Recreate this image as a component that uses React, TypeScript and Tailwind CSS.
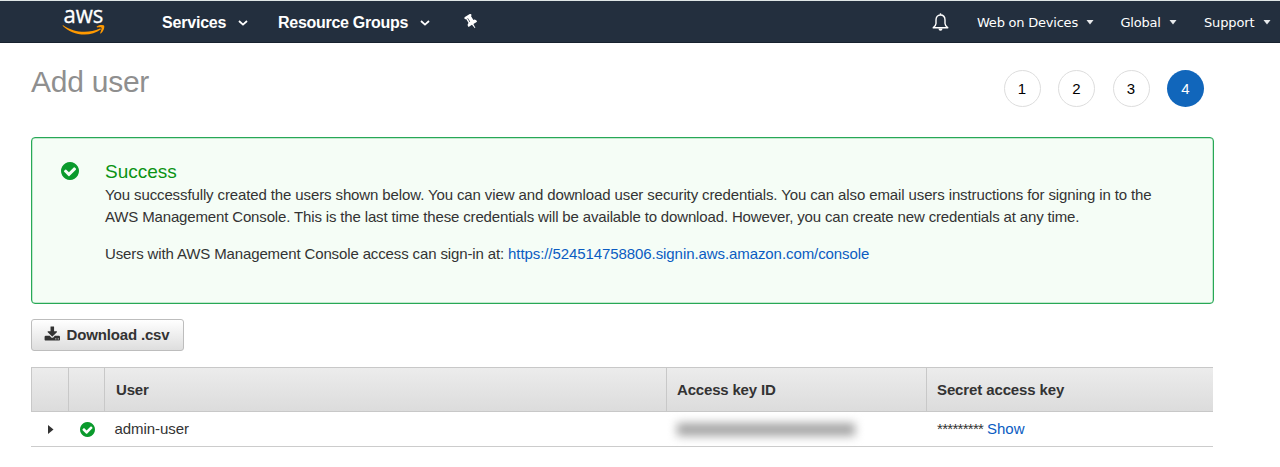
import React from "react";

const CHECK =
  "M1412 734q0-28-18-46l-91-90q-19-19-45-19t-45 19l-408 407-226-226q-19-19-45-19t-45 19l-91 90q-18 18-18 46 0 27 18 45l362 362q19 19 45 19 27 0 46-19l543-543q18-18 18-45zm252 162q0 209-103 385.5t-279.5 279.5-385.5 103-385.5-103-279.5-279.5-103-385.5 103-385.5 279.5-279.5 385.5-103 385.5 103 279.5 279.5 103 385.5z";
const DOWNLOAD =
  "M1344 1344q0-26-19-45t-45-19-45 19-19 45 19 45 45 19 45-19 19-45zm256 0q0-26-19-45t-45-19-45 19-19 45 19 45 45 19 45-19 19-45zm128-224v320q0 40-28 68t-68 28h-1472q-40 0-68-28t-28-68v-320q0-40 28-68t68-28h465l135 136q58 56 136 56t136-56l136-136h464q40 0 68 28t28 68zm-325-569q17 41-14 70l-448 448q-18 19-45 19t-45-19l-448-448q-31-29-14-70 17-39 59-39h256v-448q0-26 19-45t45-19h256q26 0 45 19t19 45v448h256q42 0 59 39z";
const PIN =
  "M800 864v-448q0-14-9-23t-23-9-23 9-9 23v448q0 14 9 23t23 9 23-9 9-23zm672 352q0 26-19 45t-45 19h-429l-51 483q-2 12-10.5 20.5t-20.5 8.5h-1q-27 0-32-27l-76-485h-404q-26 0-45-19t-19-45q0-123 78.5-221.5t177.5-98.5v-512q-52 0-90-38t-38-90 38-90 90-38h640q52 0 90 38t38 90-38 90-90 38v512q99 0 177.5 98.5t78.5 221.5z";

function CheckCircle({ className }: { className: string }) {
  return (
    <svg className={className} viewBox="128 128 1536 1536" fill="currentColor">
      <path d={CHECK} />
    </svg>
  );
}

function AwsLogo() {
  return (
    <svg className="ml-[60px] h-[41px] w-[48px]" viewBox="0 0 48 41">
      <text
        x="3.4"
        y="21.5"
        fill="#fff"
        stroke="#fff"
        strokeWidth="0.3"
        fontSize="23"
        textLength="40"
        lengthAdjust="spacingAndGlyphs"
        className="font-['Open_Sans',sans-serif]"
      >
        aws
      </text>
      <path d="M2.800 25C8 30 16 33.600 24.500 33.600c6 0 12-2 16.600-5.400-.2-.7-.6-.9-1.200-.6-5 2.100-10 3.200-15.200 3.200-8 0-15.200-2.400-21.200-6.400-.6-.4-1.100 0-.7.600z" fill="#ff9900" />
      <path d="M37 25.300c2.200-1.500 6-1.400 7-.7.700.6.300 5.200-2.900 7.700-.6.400-1.100.2-.9-.4.700-1.700 1.700-4.400 1.300-5.100-.5-.7-2.700-.6-4.200-.4-.6 0-.8-.7-.3-1.100z" fill="#ff9900" />
    </svg>
  );
}

function Chevron({ className }: { className: string }) {
  return (
    <svg className={className} viewBox="0 0 10 6" fill="none" stroke="#fff" strokeWidth="1.8">
      <path d="M1 1l4 3.600L9 1" />
    </svg>
  );
}

function Caret({ className }: { className: string }) {
  return (
    <svg className={className} viewBox="0 0 8 5" fill="#e8eaec">
      <path d="M.5 0h7L4 4.500z" />
    </svg>
  );
}

function Header() {
  return (
    <header className="flex h-[43px] items-center whitespace-nowrap border-t border-b border-t-[#dfe6e6] border-b-[#17212e] bg-[#232f3e] text-white">
      <AwsLogo />
      <div className="ml-[54px] flex w-[116px] items-center pt-[2px] text-base font-bold">
        <span className="w-[64px] tracking-[-0.2px]">Services</span>
        <Chevron className="ml-[12px] mt-[1px] h-[6px] w-[10px]" />
      </div>
      <div className="flex w-[184px] items-center pt-[2px] text-base font-bold">
        <span className="w-[130px] tracking-[-0.280px]">Resource Groups</span>
        <Chevron className="ml-[12px] mt-[1px] h-[6px] w-[10px]" />
      </div>
      <svg className="h-[16px] w-[16px] -rotate-[32deg]" viewBox="0 0 1536 1792" fill="#fff">
        <path d={PIN} />
      </svg>
      <svg className="ml-[454px] mt-[2px] h-[19px] w-[17px]" viewBox="0 0 17 19" fill="none" stroke="#fff" strokeWidth="1.400">
        <path d="M8.500 2C5.500 2 4 4.200 4 7v3.500c0 1.800-1.300 3-2.800 4.300h14.600c-1.500-1.300-2.800-2.500-2.800-4.300V7c0-2.800-1.500-5-4.500-5z" strokeLinejoin="round" />
        <path d="M8.500 .3v1.700" />
        <path d="M6.500 15.500a2 2.300 0 0 0 4 0z" fill="#fff" stroke="none" />
      </svg>
      <div className="ml-[28px] flex items-center pt-[2px] font-['DejaVu_Sans',sans-serif] text-[13px]">
        <div className="flex w-[143.500px] items-center">
          <span className="w-[101px] tracking-[-0.220px]">Web on Devices</span>
          <Caret className="ml-[8px] h-[5px] w-[8px]" />
        </div>
        <div className="flex w-[83.500px] items-center">
          <span className="w-[40px] tracking-[-0.220px]">Global</span>
          <Caret className="ml-[8px] h-[5px] w-[8px]" />
        </div>
        <div className="flex items-center">
          <span className="w-[50px] tracking-[-0.150px]">Support</span>
          <Caret className="ml-[9px] h-[5px] w-[8px]" />
        </div>
      </div>
    </header>
  );
}

function Step({ n, active = false }: { n: number; active?: boolean }) {
  return (
    <div
      className={
        active
          ? "flex size-[37px] items-center justify-center rounded-full bg-[#1166bb] pt-px text-[15px] text-white"
          : "flex size-[37px] items-center justify-center rounded-full border border-[#dddddd] pt-px text-[15px] text-black"
      }
    >
      {n}
    </div>
  );
}

export default function App() {
  return (
    <div className="h-[467px] w-[1280px] overflow-hidden bg-white font-['Liberation_Sans',Arial,sans-serif] text-[15px] text-[#333333]">
      <Header />
      <main className="ml-[31px] w-[1182px]">
        <div className="flex h-[94px] justify-between pr-[9px]">
          <h1 className="mt-[19px] text-[30px] leading-[40px] tracking-[-0.250px] text-[#8f8f8f]">Add user</h1>
          <div className="mt-[27px] flex gap-[17.500px]">
            <Step n={1} />
            <Step n={2} />
            <Step n={3} />
            <Step n={4} active />
          </div>
        </div>

        <section className="flex h-[167px] w-[1183px] rounded-[4px] border border-[#27a856] bg-[#f5fdf6] shadow-[inset_0_0_0_0.500px_#8fd4a6]">
          <CheckCircle className="ml-[29px] mt-[24px] size-[18px] text-[#0a9a2c]" />
          <div className="ml-[26px] mt-[22px] whitespace-nowrap">
            <h2 className="text-[19px] leading-[24px] text-[#0a9314]">Success</h2>
            <p className="leading-[22px]">
              <span className="tracking-[-0.116px]">You successfully created the users shown below. You can view and download user security credentials. You can also email users instructions for signing in to the</span>
              <br />
              <span className="tracking-[-0.150px]">AWS Management Console. This is the last time these credentials will be available to download. However, you can create new credentials at any time.</span>
            </p>
            <p className="mt-[15px] leading-[22px] tracking-[-0.130px]">
              Users with AWS Management Console access can sign-in at:{" "}
              <a className="tracking-[-0.080px] text-[#0a5cc2]">https://524514758806.signin.aws.amazon.com/console</a>
            </p>
          </div>
        </section>

        <button className="mt-[15px] flex h-[32px] w-[153px] items-center whitespace-nowrap rounded-[3px] border border-[#bdbdbd] bg-linear-to-b from-white to-[#dedede] pl-[12px] text-[15px] font-bold">
          <svg className="mb-[3px] h-[15px] w-[16px]" viewBox="0 0 1728 1536" fill="currentColor">
            <path d={DOWNLOAD} />
          </svg>
          <span className="ml-[6.500px] mt-px tracking-[-0.160px]">Download .csv</span>
        </button>

        <div className="mt-[16px] grid h-[45px] w-[1182px] grid-cols-[37px_36px_562px_260px_1fr] items-stretch border-y border-l border-[#c8c8c8] bg-linear-to-b from-[#ececec] to-[#dcdcdc] font-bold">
          <div className="border-r border-[#c8c8c8]" />
          <div className="border-r border-[#c8c8c8]" />
          <div className="flex items-center border-r border-[#c8c8c8] pl-[11px] pt-[2px] tracking-[-0.150px]">User</div>
          <div className="flex items-center border-r border-[#c8c8c8] pl-[10px] pt-[2px] tracking-[-0.180px]">Access key ID</div>
          <div className="flex items-center pl-[10px] pt-[2px] tracking-[-0.120px]">Secret access key</div>
        </div>
        <div className="grid h-[35px] w-[1182px] grid-cols-[38px_36px_562px_260px_1fr] items-center border-b border-[#cccccc]">
          <svg className="ml-[17px] h-[9px] w-[6px]" viewBox="0 0 6 9" fill="#333">
            <path d="M0 0l5.500 4.500L0 9z" />
          </svg>
          <CheckCircle className="ml-[11px] size-[15px] text-[#0a9a2c]" />
          <div className="pl-[9.500px] tracking-[-0.060px]">admin-user</div>
          <div className="flex pl-[10px]">
            <div className="h-[13px] w-[178px] bg-[#a6a6a6] blur-[5px]" />
          </div>
          <div className="flex items-center pl-[10px]">
            <span className="w-[46px] whitespace-nowrap tracking-[-0.700px]">*********</span>
            <a className="ml-[4px] text-[#0a5cc2]">Show</a>
          </div>
        </div>
      </main>
    </div>
  );
}
